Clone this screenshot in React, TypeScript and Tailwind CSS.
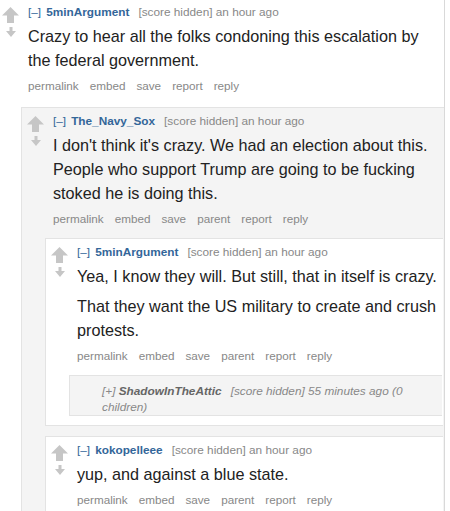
import React from "react";

const UpArrow = () => (
  <svg width="17" height="16" viewBox="0 0 17 16" className="block">
    <polygon points="8.5,0 17,8.5 12,8.5 12,16 5,16 5,8.5 0,8.5" fill="#c6c6c6" />
  </svg>
);

const DownArrow = () => (
  <svg width="10" height="10" viewBox="0 0 10 10" className="block">
    <polygon points="3.5,0 6.5,0 6.5,4 10,4 5,10 0,4 3.5,4" fill="#c6c6c6" />
  </svg>
);

type Props = {
  author: string;
  paras: string[];
  parent?: boolean;
  children?: React.ReactNode;
};

const Entry = ({ author, paras, parent }: Props) => (
  <div className="flex">
    <div className="w-[17px] mr-[9px] pt-[3px] flex flex-col items-center gap-[4px] shrink-0">
      <UpArrow />
      <DownArrow />
    </div>
    <div className="flex-1 min-w-0">
      <div className="text-[11.8px] leading-[16px] text-[#888] whitespace-nowrap">
        <span className="text-[#336699]">[–]</span>
        <span className="ml-[5px] font-bold text-[#336699]">{author}</span>
        <span className="ml-[9px]">[score hidden] an hour ago</span>
      </div>
      <div className="mt-[4px] flex flex-col gap-[6px] text-[16.2px] leading-[24px] text-[#222]">
        {paras.map((p, i) => (
          <p key={i}>{p}</p>
        ))}
      </div>
      <div className="mt-[6px] flex gap-[11px] text-[11.7px] leading-[16px] text-[#888]">
        <span>permalink</span>
        <span>embed</span>
        <span>save</span>
        {parent && <span>parent</span>}
        <span>report</span>
        <span>reply</span>
      </div>
    </div>
  </div>
);

const NestedComment = ({ author, paras, children, bg }: Props & { bg: string }) => (
  <div className={`border border-r-0 border-[#e3e3e3] pl-[5px] pt-[5px] pb-[9px] pr-[1px] ${bg}`}>
    <Entry author={author} paras={paras} parent />
    {children && <div className="ml-[18px] mt-[11px] flex flex-col gap-[10px]">{children}</div>}
  </div>
);

export default function App() {
  return (
    <div
      className="w-[445px] h-[511px] overflow-hidden bg-white border-r border-[#d9d9d9]"
      style={{ fontFamily: '"Liberation Sans", Arial, sans-serif' }}
    >
      <div className="pt-[4px] pl-[2px] pr-[6px]">
        <Entry
          author="5minArgument"
          paras={["Crazy to hear all the folks condoning this escalation by the federal government."]}
        />
      </div>
      <div className="ml-[21px] mt-[13px]">
        <NestedComment
          bg="bg-[#f4f4f4]"
          author="The_Navy_Sox"
          paras={[
            "I don't think it's crazy. We had an election about this. People who support Trump are going to be fucking stoked he is doing this.",
          ]}
        >
          <NestedComment
            bg="bg-white"
            author="5minArgument"
            paras={[
              "Yea, I know they will. But still, that in itself is crazy.",
              "That they want the US military to create and crush protests.",
            ]}
          >
            <div className="border border-r-0 border-[#e3e3e3] bg-[#f4f4f4] pl-[32px] pr-[8px] pt-[7px] pb-[0px] text-[11.8px] leading-[16px] italic text-[#888]">
              [+]{" "}
              <b className="mr-[8px] pr-[1px] font-bold text-[#666]">ShadowInTheAttic</b>
              [score hidden] 55 minutes ago (0 children)
            </div>
          </NestedComment>
          <NestedComment
            bg="bg-white"
            author="kokopelleee"
            paras={["yup, and against a blue state."]}
          />
        </NestedComment>
      </div>
    </div>
  );
}
